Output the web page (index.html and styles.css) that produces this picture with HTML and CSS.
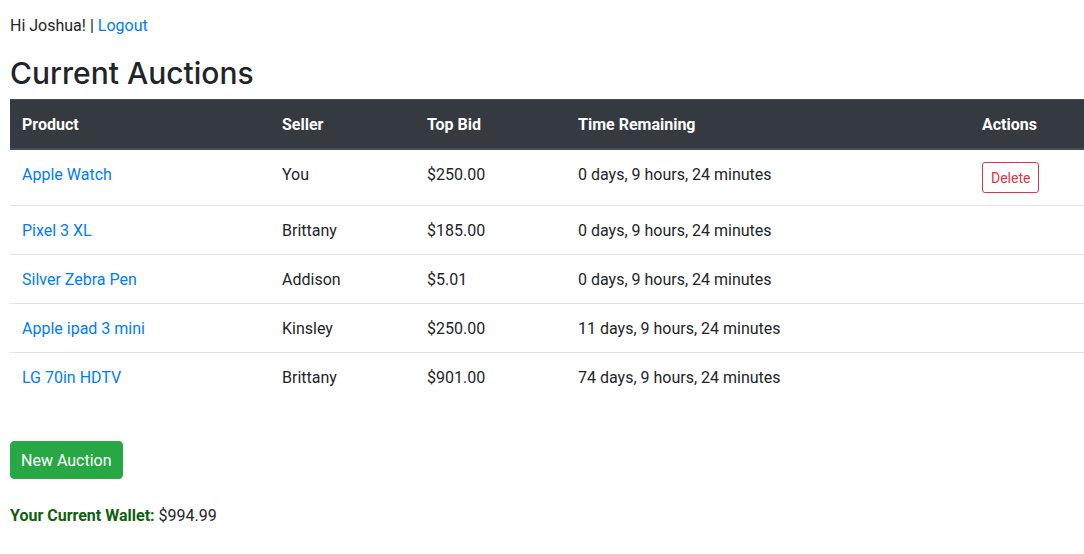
FILE: index.html
```html
<!DOCTYPE html>
<html lang="en">
<head>
<meta charset="utf-8">
<title>Current Auctions</title>
<link rel="stylesheet" href="styles.css">
</head>
<body>
<main class="page">
  <p class="greeting">Hi Joshua! | <a href="#">Logout</a></p>
  <h1 class="title">Current Auctions</h1>
  <table class="auctions">
    <colgroup><col class="col-product"><col class="col-seller"><col class="col-bid"><col class="col-time"><col class="col-actions"></colgroup>
    <thead>
      <tr><th scope="col">Product</th><th scope="col">Seller</th><th scope="col">Top Bid</th><th scope="col">Time Remaining</th><th scope="col">Actions</th></tr>
    </thead>
    <tbody>
      <tr><td><a href="#">Apple Watch</a></td><td>You</td><td>$250.00</td><td>0 days, 9 hours, 24 minutes</td><td><button type="button" class="btn-delete">Delete</button></td></tr>
      <tr><td><a href="#">Pixel 3 XL</a></td><td>Brittany</td><td>$185.00</td><td>0 days, 9 hours, 24 minutes</td><td></td></tr>
      <tr><td><a href="#">Silver Zebra Pen</a></td><td>Addison</td><td>$5.01</td><td>0 days, 9 hours, 24 minutes</td><td></td></tr>
      <tr><td><a href="#">Apple ipad 3 mini</a></td><td>Kinsley</td><td>$250.00</td><td>11 days, 9 hours, 24 minutes</td><td></td></tr>
      <tr><td><a href="#">LG 70in HDTV</a></td><td>Brittany</td><td>$901.00</td><td>74 days, 9 hours, 24 minutes</td><td></td></tr>
    </tbody>
  </table>
  <button type="button" class="btn-new">New Auction</button>
  <p class="wallet"><strong>Your Current Wallet:</strong> $994.99</p>
</main>
</body>
</html>
```
FILE: styles.css
```css
* { box-sizing: border-box; }
body {
  margin: 0;
  background: #fff;
  color: #212529;
  font: 16px/26px Roboto, "Liberation Sans", sans-serif;
}
a { color: #007bff; text-decoration: none; }
.page { padding: 13px 0 24px 10px; }
.greeting { margin: 0 0 14px; }
.title { margin: 0 0 6px; font-family: Inter, sans-serif; font-size: 30px; font-weight: 500; line-height: 40px; }
.auctions { width: 100%; table-layout: fixed; border-collapse: collapse; margin-bottom: 40px; }
.col-product { width: 260px; }
.col-seller { width: 145px; }
.col-bid { width: 151px; }
.col-actions { width: 114px; }
th, td { padding: 12px 12px 10px; text-align: left; vertical-align: top; border-top: 1px solid #dee2e6; white-space: nowrap; }
th { background: #343a40; color: #fff; border-color: #454d55; border-bottom: 2px solid #454d55; font-weight: 700; }
button { display: block; font-family: inherit; cursor: pointer; }
.btn-delete { margin-bottom: 2px; padding: 4px 8px 2px; border: 1px solid #dc3545; border-radius: 3px; background: transparent; color: #dc3545; font-size: 14px; line-height: 23px; }
.btn-new { padding: 6px 10px 4px; border: 1px solid #28a745; border-radius: 4px; background: #28a745; color: #fff; font-size: 16px; line-height: 26px; }
.wallet { margin: 24px 0 0; }
.wallet strong { color: #0f5f10; font-weight: 700; }
```
